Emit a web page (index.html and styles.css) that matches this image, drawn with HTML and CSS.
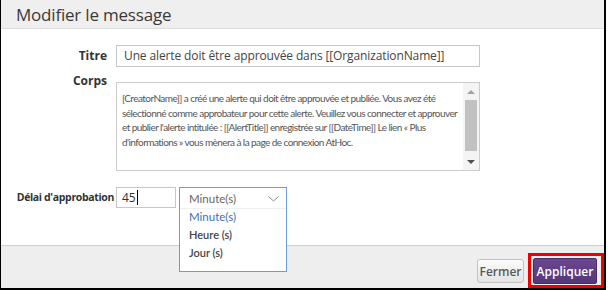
FILE: index.html
```html
<!DOCTYPE html>
<html lang="fr">
<head>
<meta charset="utf-8">
<title>Modifier le message</title>
<link rel="stylesheet" href="styles.css">
</head>
<body>
<div class="dialog">
  <header class="dlg-head">
    <h1 class="dlg-title">Modifier le message</h1>
  </header>
  <main class="dlg-body">
    <div class="row row-title">
      <label class="lbl">Titre</label>
      <div class="input input-title">Une alerte doit être approuvée dans [[OrganizationName]]</div>
    </div>
    <div class="row row-body">
      <label class="lbl lbl-corps">Corps</label>
      <div class="textarea">
        <div class="ta-text">[CreatorName]] a créé une alerte qui doit être approuvée et publiée. Vous avez été<br>sélectionné comme approbateur pour cette alerte. Veuillez vous connecter et approuver<br>et publier l'alerte intitulée : [[AlertTitle]] enregistrée sur [[DateTime]] Le lien « Plus<br>d'informations » vous mènera à la page de connexion AtHoc.</div>
        <div class="scrollbar">
          <div class="sb-btn"><span class="tri tri-up"></span></div>
          <div class="sb-track"><div class="sb-thumb"></div></div>
          <div class="sb-btn"><span class="tri tri-down"></span></div>
        </div>
      </div>
    </div>
    <div class="row row-delay">
      <label class="lbl lbl-delay">Délai d'approbation</label>
      <div class="input input-num">45<span class="caret"></span></div>
      <div class="select">
        <div class="select-box">
          <div class="select-trigger">
            <span>Minute(s)</span>
            <svg class="chev" width="11" height="6" viewBox="0 0 11 6"><path d="M0.5 0.5 L5.5 5 L10.5 0.5" fill="none" stroke="#8a8a8a" stroke-width="1"/></svg>
          </div>
          <ul class="options">
            <li class="opt opt-active">Minute(s)</li>
            <li class="opt">Heure (s)</li>
            <li class="opt">Jour (s)</li>
          </ul>
        </div>
      </div>
    </div>
  </main>
  <footer class="dlg-foot">
    <button class="btn btn-close">Fermer</button>
    <span class="highlight"><button class="btn btn-apply">Appliquer</button></span>
  </footer>
</div>
</body>
</html>
```
FILE: styles.css
```css
* { box-sizing: border-box; }
html, body { margin: 0; padding: 0; background: #fff; }
body { font-family: "Open Sans", "Noto Sans", sans-serif; color: #333; }

.dialog {
  width: 606px;
  height: 290px;
  border-left: 1px solid #000;
  border-right: 2px solid #000;
  border-bottom: 2px solid #000;
  display: flex;
  flex-direction: column;
  background: #fff;
}

.dlg-head {
  height: 29px;
  background: #efefef;
  border-bottom: 1px solid #dcdcdc;
  padding-left: 15px;
  display: flex;
  align-items: center;
}
.dlg-title {
  margin: 0;
  font-weight: 400;
  font-size: 17px;
  color: #3a3a3a;
  letter-spacing: -0.2px;
  line-height: 1;
  margin-top: 1px;
}

.dlg-body {
  flex: 1;
  display: flex;
  flex-direction: column;
}
.row { display: flex; align-items: flex-start; }
.row-title { margin-top: 16px; align-items: center; }
.row-body { margin-top: 15px; }
.row-delay { margin-top: 16px; }

.lbl {
  width: 106px;
  margin-right: 9px;
  text-align: right;
  font-weight: 700;
  font-size: 12px;
  color: #333;
  line-height: 16px;
}
.lbl-corps { margin-top: -9px; }
.lbl-delay {
  width: 113px;
  margin-right: 2px;
  font-size: 10.5px;
  letter-spacing: -0.35px;
  line-height: 20px;
}

.input {
  border: 1px solid #c6c6c6;
  background: #fff;
  font-size: 12px;
  color: #444;
}
.input-title {
  width: 364px;
  height: 22px;
  line-height: 20px;
  padding-left: 7px;
  letter-spacing: -0.12px;
  white-space: nowrap;
  overflow: hidden;
}

.textarea {
  width: 364px;
  height: 89px;
  border: 1px solid #cccccc;
  display: flex;
}
.ta-text {
  flex: 1;
  padding: 8px 0 0 5px;
  font-family: "Lato", sans-serif;
  font-size: 10px;
  letter-spacing: -0.56px;
  line-height: 14.5px;
  color: #555;
  white-space: nowrap;
  overflow: hidden;
}
.scrollbar {
  width: 16px;
  background: #f4f4f4;
  display: flex;
  flex-direction: column;
}
.sb-btn {
  height: 17px;
  display: flex;
  align-items: center;
  justify-content: center;
}
.sb-track { flex: 1; padding: 0 2px; }
.sb-thumb { height: 51px; background: #c1c1c1; }
.tri { width: 0; height: 0; border-left: 4px solid transparent; border-right: 4px solid transparent; }
.tri-up { border-bottom: 4px solid #a3a3a3; }
.tri-down { border-top: 4px solid #505050; }

.input-num {
  width: 60px;
  height: 21px;
  line-height: 19px;
  padding-left: 5px;
  font-size: 12px;
  color: #333;
  display: flex;
  align-items: center;
}
.caret {
  display: inline-block;
  width: 1px;
  height: 15px;
  background: #000;
  margin-left: 1px;
}

.select {
  position: relative;
  width: 108px;
  height: 21px;
  margin-left: 3px;
}
.select-box {
  position: absolute;
  top: 0;
  left: 0;
  width: 108px;
  height: 85px;
  border: 1px solid #6d9be0;
  background: #fff;
  font-family: "Lato", sans-serif;
  font-size: 11.5px;
  z-index: 5;
}
.select-trigger {
  height: 20px;
  display: flex;
  align-items: center;
  justify-content: space-between;
  padding: 0 7px 0 9px;
  color: #666;
  box-shadow: 0 1px 1px rgba(0,0,0,0.06);
}
.chev { margin-top: 1px; }
.options { list-style: none; margin: 0; padding: 0; }
.opt {
  height: 18px;
  line-height: 18px;
  padding-left: 9px;
  color: #444;
  font-weight: 600;
  font-size: 11px;
}
.opt-active { color: #3f6fae; font-weight: 400; font-size: 11.5px; }

.dlg-foot {
  height: 43px;
  background: #eeeeee;
  border-top: 1px solid #cfcfcf;
  display: flex;
  justify-content: flex-end;
  align-items: flex-end;
}
.btn {
  font-family: "Open Sans", sans-serif;
  font-size: 12px;
  font-weight: 600;
  cursor: pointer;
  padding: 0;
}
.btn-close {
  width: 47px;
  height: 24px;
  margin-right: 4px;
  margin-bottom: 5px;
  border: 1px solid #c3c3c3;
  border-radius: 3px;
  background: linear-gradient(#fbfbfb, #e4e4e4);
  color: #5a5a5a;
}
.highlight {
  display: block;
  border: 3px solid #ee0000;
  padding: 2px 4px 1px 2px;
}
.btn-apply {
  display: block;
  width: 64px;
  height: 26px;
  border: 1px solid #4a2d66;
  border-radius: 2px;
  background: linear-gradient(#6a4790, #573679);
  color: #fff;
}
```
